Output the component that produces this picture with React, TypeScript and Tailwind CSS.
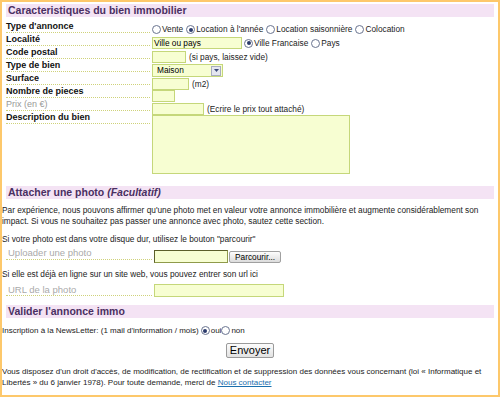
import React from "react";

function Radio({ checked }: { checked?: boolean }) {
  return (
    <span className="inline-flex items-center justify-center w-[9px] h-[9px] rounded-full border border-[#6a7490] bg-white mr-[1px] align-[-1px]">
      {checked && <span className="w-[4px] h-[4px] rounded-full bg-[#2b3a6b]" />}
    </span>
  );
}

function Heading({ children }: { children: React.ReactNode }) {
  return (
    <div className="mx-[4px] h-[13px] bg-[#f4e3f4] text-[#4a2f62] font-bold text-[10.5px] leading-[13px] pl-[2px]">
      {children}
    </div>
  );
}

const inputCls =
  "h-[12px] bg-[#f7fed2] border border-[#c5d77a] box-border";

function Row({
  label,
  gray,
  children,
}: {
  label: string;
  gray?: boolean;
  children?: React.ReactNode;
}) {
  return (
    <div className="flex h-[13px] items-start">
      <div
        className={
          "w-[144px] h-[13px] border-b border-dotted border-[#cfd27a] leading-[12px] text-[9px] " +
          (gray ? "text-[#999] font-normal" : "font-bold text-[#111]")
        }
      >
        {label}
      </div>
      <div className="ml-[2px] flex items-start text-[8.3px] text-[#222]">
        {children}
      </div>
    </div>
  );
}

export default function App() {
  return (
    <div
      className="w-[500px] h-[397px] border-2 border-[#fdc86b] bg-white overflow-hidden text-[#222]"
      style={{ fontFamily: "'Liberation Sans', Arial, sans-serif" }}
    >
      <div className="h-[2px]" />
      <Heading>Caracteristiques du bien immobilier</Heading>
      <div className="mt-[3px] ml-[4px]">
        <Row label="Type d'annonce">
          <div className="mt-[5px] flex items-center leading-[9px] whitespace-nowrap">
            <Radio />
            <span className="mr-[3px]">Vente</span>
            <Radio checked />
            <span className="mr-[3px]">Location à l'année</span>
            <Radio />
            <span className="mr-[3px]">Location saisonnière</span>
            <Radio />
            <span>Colocation</span>
          </div>
        </Row>
        <Row label="Localité">
          <div className="mt-[4px] flex items-center whitespace-nowrap">
            <div className={inputCls + " w-[90px] text-[8.3px] leading-[10px] pl-[1px] text-black"}>
              Ville ou pays
            </div>
            <span className="ml-[2px] flex items-center">
              <Radio checked />
              <span className="mr-[3px]">Ville Francaise</span>
              <Radio />
              <span>Pays</span>
            </span>
          </div>
        </Row>
        <Row label="Code postal">
          <div className="mt-[5px] flex items-center whitespace-nowrap">
            <div className={inputCls + " w-[34px]"} />
            <span className="ml-[3px]">(si pays, laissez vide)</span>
          </div>
        </Row>
        <Row label="Type de bien">
          <div className="mt-[5px] flex items-center">
            <div className="w-[71px] h-[13px] bg-[#f7fed2] border border-[#c5d77a] flex items-center justify-between text-[8.3px] text-black pl-[4px]">
              <span>Maison</span>
              <span className="w-[10px] h-[10px] mr-[1px] bg-[#e4e6f0] border border-[#a8acc0] flex items-center justify-center">
                <svg width="5" height="3" viewBox="0 0 5 3">
                  <path d="M0 0 L5 0 L2.5 3 Z" fill="#3a4a7a" />
                </svg>
              </span>
            </div>
          </div>
        </Row>
        <Row label="Surface">
          <div className="mt-[6px] flex items-center whitespace-nowrap">
            <div className={inputCls + " w-[37px]"} />
            <span className="ml-[3px]">(m2)</span>
          </div>
        </Row>
        <Row label="Nombre de pieces">
          <div className="mt-[5px] flex items-center">
            <div className={inputCls + " w-[23px]"} />
          </div>
        </Row>
        <Row label="Prix (en €)" gray>
          <div className="mt-[5px] flex items-center whitespace-nowrap">
            <div className={inputCls + " w-[52px]"} />
            <span className="ml-[3px]">(Ecrire le prix tout attaché)</span>
          </div>
        </Row>
        <Row label="Description du bien">
          <div className="mt-[4px]">
            <div className="w-[198px] h-[59px] bg-[#f7fed2] border border-[#c5d77a]" />
          </div>
        </Row>
      </div>
      <div className="h-[62px]" />
      <Heading>
        Attacher une photo <i>(Facultatif)</i>
      </Heading>
      <p className="mt-[6px] text-[8.3px] leading-[11px]">
        Par expérience, nous pouvons affirmer qu'une photo met en valeur votre annonce immobilière et augmente considérablement son impact. Si vous ne souhaitez pas passer une annonce avec photo, sautez cette section.
      </p>
      <p className="mt-[7px] text-[8.3px] leading-[11px]">
        Si votre photo est dans votre disque dur, utilisez le bouton "parcourir"
      </p>
      <div className="flex items-start ml-[4px] mt-[2px]">
        <div className="w-[146px] h-[13px] border-b border-dotted border-[#cfd27a] text-[9.5px] leading-[12px] text-[#aaa] pl-[2px]">
          Uploader une photo
        </div>
        <div className="flex items-center mt-[3px] ml-[2px]">
          <div className="w-[74px] h-[13px] bg-[#f7fed2] border border-[#8f9a4a] border-t-[#5c5f2a] border-l-[#5c5f2a]" />
          <div className="ml-[1px] h-[12px] px-[5px] bg-gradient-to-b from-[#fdfdfd] to-[#dcdcdc] border border-[#a0a0a0] rounded-[2px] text-[8.3px] leading-[10px] text-black">
            Parcourir...
          </div>
        </div>
      </div>
      <p className="mt-[6px] text-[8.3px] leading-[11px]">
        Si elle est déjà en ligne sur un site web, vous pouvez entrer son url ici
      </p>
      <div className="flex items-start ml-[4px] mt-[1px]">
        <div className="w-[146px] h-[15px] border-b border-dotted border-[#cfd27a] text-[9.5px] leading-[13px] text-[#aaa] pl-[2px] pt-[2px] box-border">
          URL de la photo
        </div>
        <div className="mt-[3px] ml-[2px]">
          <div className={inputCls + " w-[130px] h-[13px]"} />
        </div>
      </div>
      <div className="h-[8px]" />
      <Heading>Valider l'annonce immo</Heading>
      <p className="mt-[7px] text-[8px] leading-[11px] flex items-center whitespace-nowrap">
        <span className="mr-[2px]">Inscription à la NewsLetter: (1 mail d'information / mois)</span>
        <Radio checked />
        <span>oui</span>
        <Radio />
        <span>non</span>
      </p>
      <div className="flex justify-center mt-[7px]">
        <div className="h-[15px] px-[3px] bg-gradient-to-b from-[#fcfcfc] to-[#e2e2e2] border border-[#9a9a9a] rounded-[2px] text-[11px] leading-[13px] text-black">
          Envoyer
        </div>
      </div>
      <p className="mt-[8px] text-[8px] leading-[11px]">
        Vous disposez d'un droit d'accès, de modification, de rectification et de suppression des données vous concernant (loi « Informatique et Libertés » du 6 janvier 1978). Pour toute demande, merci de{" "}
        <a className="text-[#1b6fae] underline">Nous contacter</a>
      </p>
    </div>
  );
}
